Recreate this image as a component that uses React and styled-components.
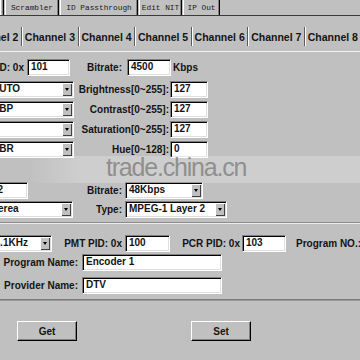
import React from 'react'
import styled, { createGlobalStyle, css } from 'styled-components'

const GlobalStyle = createGlobalStyle`
  body {
    margin: 0;
    background: #c0c0c0;
  }
`

const Root = styled.div`
  position: relative;
  width: 360px;
  height: 360px;
  overflow: hidden;
  background: #c0c0c0;
  font-family: 'Liberation Sans', Arial, sans-serif;
  color: #141414;
`

const TopTabs = styled.div`
  display: flex;
  gap: 1px;
  height: 15px;
  border-bottom: 1px solid #3a3a3a;
`

const TopTab = styled.div`
  flex: none;
  width: ${(p) => p.$w}px;
  box-sizing: border-box;
  border-left: 1px solid #fff;
  border-right: 1px solid #000;
  box-shadow: inset -1px 0 #808080;
  display: flex;
  align-items: center;
  justify-content: center;
  font: 7.8px 'Liberation Mono', monospace;
  color: #1a1a1a;
`

const ChannelBar = styled.div`
  display: flex;
  height: 24px;
  margin-top: 11px;
  margin-left: -34.5px;
  border-bottom: 1px solid #f2f2f2;
`

const ChannelTab = styled.div`
  flex: none;
  width: 56.6px;
  height: 19px;
  box-sizing: border-box;
  border-right: 1px solid #5a5a5a;
  box-shadow: 1px 0 #fff;
  display: flex;
  align-items: center;
  justify-content: center;
  font-size: 10.5px;
  font-weight: bold;
`

const Form = styled.div`
  margin-left: -12px;
`

const Row = styled.div`
  display: flex;
  align-items: center;
  height: 17px;
  margin-top: ${(p) => p.$mt}px;
`

const Label = styled.div`
  flex: none;
  display: flex;
  justify-content: ${(p) => (p.$left ? 'flex-start' : 'flex-end')};
  width: ${(p) => (p.$w ? `${p.$w}px` : 'auto')};
  margin-left: ${(p) => p.$ml || 0}px;
  white-space: nowrap;
  font-size: 10px;
  font-weight: bold;
`

const sunken = css`
  flex: none;
  box-sizing: border-box;
  height: 17px;
  background: #fff;
  border-top: 1px solid #808080;
  border-left: 1px solid #808080;
  border-right: 1px solid #fff;
  border-bottom: 1px solid #fff;
  box-shadow: inset 1px 1px #000, inset -1px -1px #dfdfdf;
  font-size: 10px;
  font-weight: bold;
  white-space: nowrap;
  overflow: hidden;
`

const Field = styled.div`
  ${sunken}
  width: ${(p) => p.$w}px;
  margin-left: ${(p) => p.$ml || 0}px;
  padding: 1px 0 0 3px;
  line-height: 12px;
`

const Select = styled.div`
  ${sunken}
  display: flex;
  width: ${(p) => p.$w}px;
  margin-left: ${(p) => p.$ml || 0}px;
`

const Value = styled.div`
  flex: 1;
  padding: 1px 0 0 3px;
  line-height: 12px;
  text-indent: ${(p) => p.$indent || 0}px;
  overflow: hidden;
`

const DropButton = styled.div`
  flex: none;
  width: 10px;
  margin: 1px 1px 1px 0;
  background: #c0c0c0;
  box-shadow: inset 1px 1px #fff, inset -1px -1px #404040;
  display: flex;
  align-items: center;
  justify-content: center;

  &::after {
    content: '';
    border-left: 2.5px solid transparent;
    border-right: 2.5px solid transparent;
    border-top: 3px solid #000;
  }
`

const Divider = styled.div`
  margin-top: ${(p) => p.$mt}px;
  border-top: 1px solid ${(p) => p.$dark || '#8c8c8c'};
  border-bottom: 1px solid ${(p) => p.$light || '#ececec'};
`

const ButtonRow = styled.div`
  display: flex;
  gap: 114px;
  margin-top: 20px;
  padding-left: 17px;
`

const Button = styled.div`
  width: 60px;
  height: 20px;
  box-sizing: border-box;
  display: flex;
  align-items: center;
  justify-content: center;
  border-top: 1px solid #fff;
  border-left: 1px solid #fff;
  border-right: 1px solid #000;
  border-bottom: 1px solid #000;
  box-shadow: inset -1px -1px #808080;
  font-size: 10px;
  font-weight: bold;
`

const WatermarkBand = styled.div`
  position: absolute;
  left: 28px;
  right: 0;
  top: 156px;
  height: 27px;
  background: linear-gradient(
    90deg,
    rgba(255, 255, 255, 0) 0,
    rgba(255, 255, 255, 0.22) 50px
  );
`

const WatermarkText = styled.div`
  position: absolute;
  left: 106px;
  top: 153px;
  font-family: 'Liberation Sans', Arial, sans-serif;
  font-size: 25px;
  letter-spacing: -1.2px;
  color: rgba(110, 110, 110, 0.68);
`

function Combo({ w, ml, indent, children }) {
  return (
    <Select $w={w} $ml={ml}>
      <Value $indent={indent}>{children}</Value>
      <DropButton />
    </Select>
  )
}

const topTabs = [
  { name: '', w: 4 },
  { name: 'Scrambler', w: 54 },
  { name: 'ID Passthrough', w: 78 },
  { name: 'Edit NIT', w: 43 },
  { name: 'IP Out', w: 37 },
]

const channels = [2, 3, 4, 5, 6, 7, 8]

const picture = [
  { mode: 'AUTO', label: 'Brightness[0~255]:', value: '127', mt: 5 },
  { mode: 'CBP', label: 'Contrast[0~255]:', value: '127', mt: 3 },
  { mode: '', label: 'Saturation[0~255]:', value: '127', mt: 3 },
  { mode: 'CBR', label: 'Hue[0~128]:', value: '0', mt: 3 },
]

export default function App() {
  return (
    <Root>
      <GlobalStyle />
      <TopTabs>
        {topTabs.map((t, i) => (
          <TopTab key={i} $w={t.w}>
            {t.name}
          </TopTab>
        ))}
      </TopTabs>

      <ChannelBar>
        {channels.map((n) => (
          <ChannelTab key={n}>Channel {n}</ChannelTab>
        ))}
      </ChannelBar>

      <Form>
        <Row $mt={7}>
          <Label $w={36}>Video PID: 0x</Label>
          <Field $ml={3} $w={43}>101</Field>
          <Label $w={52}>Bitrate:</Label>
          <Field $ml={5} $w={44}>4500</Field>
          <Label $ml={2}>Kbps</Label>
        </Row>

        {picture.map((r) => (
          <Row key={r.label} $mt={r.mt}>
            <Combo w={86}>{r.mode}</Combo>
            <Label $w={95}>{r.label}</Label>
            <Field $ml={1} $w={38}>{r.value}</Field>
          </Row>
        ))}

        <Row $mt={24}>
          <Field $w={40}>32</Field>
          <Label $w={94}>Bitrate:</Label>
          <Combo ml={3} w={78}>48Kbps</Combo>
        </Row>

        <Row $mt={2}>
          <Combo w={85} indent={-4}>Sterea</Combo>
          <Label $w={49}>Type:</Label>
          <Combo ml={3} w={102}>MPEG-1 Layer 2</Combo>
        </Row>

        <Divider $mt={4} />

        <Row $mt={11}>
          <Combo w={64} indent={-3}>44.1KHz</Combo>
          <Label $w={70}>PMT PID: 0x</Label>
          <Field $ml={3} $w={45}>100</Field>
          <Label $w={70}>PCR PID: 0x</Label>
          <Field $ml={2} $w={44}>103</Field>
          <Label $ml={10} $left>Program NO.:</Label>
        </Row>

        <Row $mt={2}>
          <Label $w={90}>Program Name:</Label>
          <Field $ml={4} $w={140}>Encoder 1</Field>
        </Row>

        <Row $mt={6}>
          <Label $w={90}>Provider Name:</Label>
          <Field $ml={4} $w={140}>DTV</Field>
        </Row>

        <Divider $mt={5} $dark="#7a7a7a" $light="#9a9a9a" />
      </Form>

      <ButtonRow>
        <Button>Get</Button>
        <Button>Set</Button>
      </ButtonRow>

      <WatermarkBand />
      <WatermarkText>trade.china.cn</WatermarkText>
    </Root>
  )
}
